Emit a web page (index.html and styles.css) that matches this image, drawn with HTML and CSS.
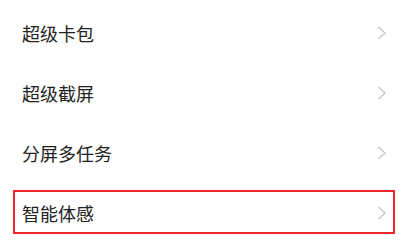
FILE: index.html
```html
<!DOCTYPE html>
<html lang="zh-CN">
<head>
    <meta charset="UTF-8">
    <meta name="viewport" content="width=device-width, initial-scale=1.0">
    <title>设置</title>
    <link rel="stylesheet" href="styles.css">
</head>
<body>

<ul class="settings-list">
    <li class="settings-item">
        <span class="item-label">超级卡包</span>
        <svg class="chevron" viewBox="0 0 10 14"><path d="M1.5 1 L8 7 L1.5 13"/></svg>
    </li>
    <li class="settings-item">
        <span class="item-label">超级截屏</span>
        <svg class="chevron" viewBox="0 0 10 14"><path d="M1.5 1 L8 7 L1.5 13"/></svg>
    </li>
    <li class="settings-item">
        <span class="item-label">分屏多任务</span>
        <svg class="chevron" viewBox="0 0 10 14"><path d="M1.5 1 L8 7 L1.5 13"/></svg>
    </li>
    <!-- highlighted row -->
    <li class="settings-item marked">
        <span class="item-label">智能体感</span>
        <svg class="chevron" viewBox="0 0 10 14"><path d="M1.5 1 L8 7 L1.5 13"/></svg>
    </li>
</ul>

</body>
</html>
```

FILE: styles.css
```css
body {
    font-family: "Noto Sans CJK SC", "Noto Sans", sans-serif;
    background-color: #fff;
    margin: 0;
    padding: 0;
}
.settings-list {
    list-style-type: none;
    margin: 0;
    padding: 3px 0 0 0;
}
.settings-item {
    display: flex;
    align-items: center;
    justify-content: space-between;
    height: 60px;
    padding: 0 20px 0 22px;
    position: relative;
}
.item-label {
    font-size: 18px;
    color: #222;
    letter-spacing: 0;
}
.chevron {
    width: 10px;
    height: 14px;
    fill: none;
    stroke: #c6c6c6;
    stroke-width: 1.4;
}
.settings-item.marked::after {
    content: "";
    position: absolute;
    left: 13px;
    right: 12px;
    top: 7px;
    bottom: 9px;
    border: 2.5px solid #f0262e;
}
```
